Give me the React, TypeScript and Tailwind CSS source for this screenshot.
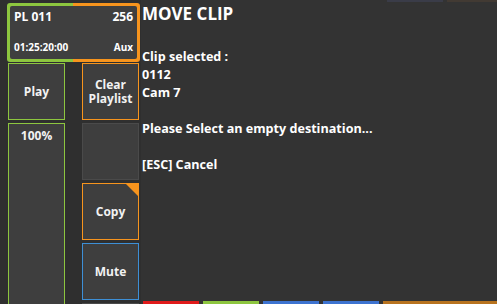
import React from "react";

const font = { fontFamily: '"Open Sans", "Noto Sans", sans-serif' };

type TileProps = {
  label?: string;
  border: string;
  corner?: boolean;
  top?: boolean;
  className?: string;
};

const Tile = ({ label, border, corner, top, className = "" }: TileProps) => (
  <div
    className={`relative shrink-0 w-[57px] h-[57px] border bg-[#3e3e3e] text-[#f2f2f2] text-[12px] font-bold leading-[14px] flex justify-center text-center ${top ? "items-start pt-[8px]" : "items-center"} ${border} ${className}`}
  >
    {corner && (
      <span className="absolute top-0 right-0 w-0 h-0 border-t-[12px] border-l-[12px] border-t-[#f7941d] border-l-transparent" />
    )}
    <span>{label}</span>
  </div>
);

export default function App() {
  return (
    <div
      className="w-[497px] h-[304px] overflow-hidden flex bg-[#333333] text-white"
      style={font}
    >
      {/* left panel */}
      <div className="w-[141px] shrink-0 bg-[#2f2f2f] flex flex-col pl-[7px] pt-[3px]">
        <div className="shrink-0 w-[133px] h-[59px] rounded-[3px] p-[3px] bg-[linear-gradient(to_right,#8dc63f_50%,#f7941d_50%)]">
          <div className="h-full rounded-[2px] bg-[#3f3f3f] flex flex-col justify-between px-[4px] pt-[3px] pb-[5px] font-bold">
            <div className="flex justify-between text-[12px] leading-[16px]">
              <span>PL 011</span>
              <span>256</span>
            </div>
            <div className="flex justify-between text-[10px] leading-[14px]">
              <span>01:25:20:00</span>
              <span>Aux</span>
            </div>
          </div>
        </div>

        <div className="shrink-0 flex gap-[17px] mt-[1px] pl-[1px]">
          <div className="flex flex-col gap-[3px]">
            <Tile label="Play" border="border-[#8dc63f]" />
            <Tile
              label="100%"
              border="border-[#8dc63f]"
              top
              className="h-[200px] !pt-[5px]"
            />
          </div>
          <div className="flex flex-col gap-[3px]">
            <Tile label={"Clear\nPlaylist"} border="border-[#f7941d]" className="whitespace-pre-line" />
            <Tile border="border-[#4a4a4a]" />
            <Tile label="Copy" border="border-[#f7941d]" corner />
            <Tile label="Mute" border="border-[#3d8fd6]" />
            <Tile border="border-[#4a4a4a]" />
          </div>
        </div>
      </div>

      {/* main */}
      <div className="flex-1 flex flex-col relative">
        <div className="flex gap-[4px] pl-[2px] h-[2px]">
          <div className="w-[240px]" />
          <div className="w-[56px] bg-[#3a3c48]" />
          <div className="flex-1 bg-[#423a33]" />
        </div>
        <div className="pl-[1px] font-bold">
          <h1 className="text-[17px] leading-[24px]">MOVE CLIP</h1>
          <div className="text-[12.6px] leading-[18px] mt-[22px]">
            <p>Clip selected :</p>
            <p>0112</p>
            <p>Cam 7</p>
            <p className="mt-[18px]">Please Select an empty destination...</p>
            <p className="mt-[18px]">[ESC] Cancel</p>
          </div>
        </div>
        <div className="mt-auto flex gap-[4px] pl-[2px] h-[3px]">
          <div className="w-[56px] bg-[#e01b1b]" />
          <div className="w-[56px] bg-[#8dc63f]" />
          <div className="w-[56px] bg-[#3d73d0]" />
          <div className="w-[56px] bg-[#3d73d0]" />
          <div className="flex-1 bg-[#b8731f]" />
        </div>
      </div>
    </div>
  );
}
